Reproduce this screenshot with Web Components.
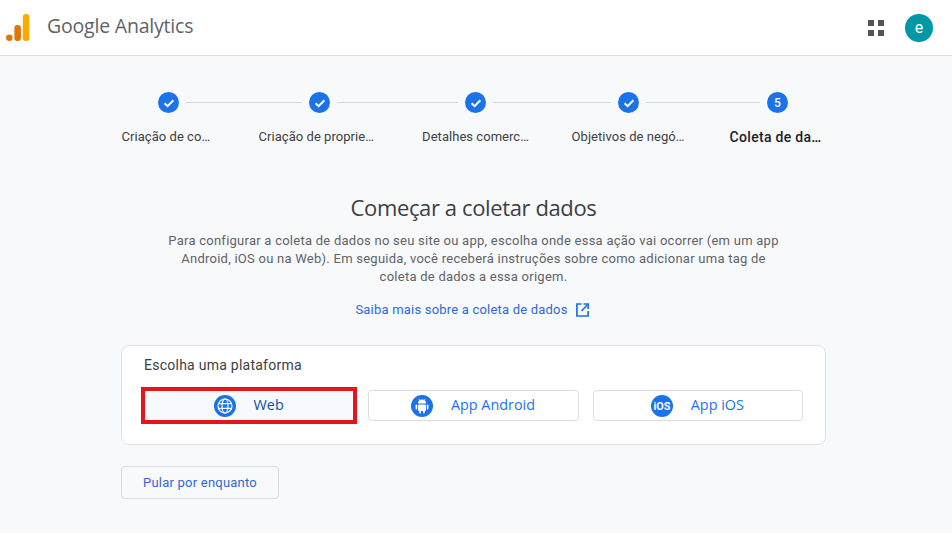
<!DOCTYPE html>
<html lang="pt">
<head>
<meta charset="utf-8">
<title>Google Analytics</title>
<style>
  html, body { margin: 0; padding: 0; height: 100%; overflow: hidden; }
  body { background: #f8f9fb; font-family: Roboto, "Noto Sans", sans-serif; color: #3c4043; }
</style>
</head>
<body>
<ga-topbar></ga-topbar>
<ga-page>
  <ga-stepper></ga-stepper>
  <ga-intro></ga-intro>
  <ga-platforms></ga-platforms>
  <ga-skip>Pular por enquanto</ga-skip>
</ga-page>

<script>
class GaTopbar extends HTMLElement {
  connectedCallback() {
    this.attachShadow({ mode: 'open' });
    this.shadowRoot.innerHTML = `
      <style>
        :host { display: flex; align-items: center; height: 55px; background: #fff; border-bottom: 1px solid #dadce0; }
        .logo { margin-left: 6px; display: block; }
        .name { margin-left: 17px; font: 400 19.5px "Open Sans", sans-serif; letter-spacing: -0.2px; color: #5f6368; position: relative; top: -2px; }
        .apps { margin-left: auto; display: block; }
        .avatar { width: 28px; height: 28px; margin: 0 19px 0 21px; border-radius: 50%; background: #0097a7; color: #fff; font: 400 16px Roboto, sans-serif; display: flex; align-items: center; justify-content: center; }
      </style>
      <svg class="logo" width="24" height="28" viewBox="0 0 24 28" aria-hidden="true">
        <circle cx="3.3" cy="23.7" r="3.2" fill="#e37400"/>
        <rect x="8.4" y="11" width="6.5" height="16" rx="3" fill="#e37400"/>
        <rect x="16.8" y="0" width="6.5" height="27" rx="3" fill="#f9ab00"/>
      </svg>
      <span class="name">Google Analytics</span>
      <svg class="apps" width="16" height="16" viewBox="0 0 16 16" fill="#545454" aria-hidden="true">
        <rect x="0" y="0" width="6" height="6"/><rect x="10" y="0" width="6" height="6"/>
        <rect x="0" y="10" width="6" height="6"/><rect x="10" y="10" width="6" height="6"/>
      </svg>
      <div class="avatar">e</div>
    `;
  }
}

class GaPage extends HTMLElement {
  connectedCallback() {
    this.attachShadow({ mode: 'open' });
    this.shadowRoot.innerHTML = `
      <style>
        :host { display: block; width: 705px; margin: 0 0 0 121px; }
      </style>
      <slot></slot>
    `;
  }
}

class GaStepper extends HTMLElement {
  connectedCallback() {
    const check = '<svg width="14" height="14" viewBox="0 0 14 14" aria-hidden="true"><path d="M2.6 7.3 5.6 10.2 11.4 4.3" fill="none" stroke="#fff" stroke-width="2"/></svg>';
    this.attachShadow({ mode: 'open' });
    this.shadowRoot.innerHTML = `
      <style>
        :host { display: block; padding-top: 36px; }
        .track { display: flex; align-items: center; padding-left: 37px; }
        .dot { flex: none; width: 21px; height: 21px; border-radius: 50%; background: #1a73e8; color: #fff; font: 500 12px Roboto, sans-serif; display: flex; align-items: center; justify-content: center; }
        .line { flex: none; height: 1px; background: #d5d7da; margin: 0 7px 0 7px; }
        .labels { display: flex; margin-top: 15px; padding-left: 0.6px; font-size: 13px; line-height: 18px; height: 18px; color: #3c4043; letter-spacing: 0.04px; white-space: nowrap; }
        .labels span { flex: none; }
        .labels .on { font-weight: 500; font-size: 14px; color: #202124; letter-spacing: 0.3px; }
      </style>
      <div class="track">
        <div class="dot">${check}</div><div class="line" style="width:116px"></div>
        <div class="dot">${check}</div><div class="line" style="width:121px"></div>
        <div class="dot">${check}</div><div class="line" style="width:118px"></div>
        <div class="dot">${check}</div><div class="line" style="width:114px"></div>
        <div class="dot">5</div>
      </div>
      <div class="labels">
        <span style="width:137px">Criação de co…</span>
        <span style="width:163.5px">Criação de proprie…</span>
        <span style="width:149.5px">Detalhes comerc…</span>
        <span style="width:158px">Objetivos de negó…</span>
        <span class="on">Coleta de da…</span>
      </div>
    `;
  }
}

class GaIntro extends HTMLElement {
  connectedCallback() {
    this.attachShadow({ mode: 'open' });
    this.shadowRoot.innerHTML = `
      <style>
        :host { display: block; text-align: center; padding-top: 46px; }
        h1 { margin: 0; font: 400 22px/30px "Open Sans", sans-serif; letter-spacing: -0.38px; color: #3c4043; }
        p { margin: 10px auto 0; width: 620px; font: 400 13px/18px Roboto, sans-serif; letter-spacing: 0.25px; color: #5f6368; }
        a { margin: 15px 3px 0 0; display: inline-flex; align-items: center; gap: 8px; font: 400 13px/18px Roboto, sans-serif; letter-spacing: 0.2px; color: #3367d6; text-decoration: none; }
        svg { display: block; }
      </style>
      <h1>Começar a coletar dados</h1>
      <p>Para configurar a coleta de dados no seu site ou app, escolha onde essa ação vai ocorrer (em um app Android, iOS ou na Web). Em seguida, você receberá instruções sobre como adicionar uma tag de coleta de dados a essa origem.</p>
      <a href="#">Saiba mais sobre a coleta de dados
        <svg width="13" height="14" viewBox="0 0 13 14" fill="none" stroke="#1a73e8" stroke-width="1.7" aria-hidden="true">
          <path d="M5.5 1H.9V13H12.1V8"/><path d="M7.5 1H12.1V6"/><path d="M12.1 1 5.5 8"/>
        </svg>
      </a>
    `;
  }
}

class GaPlatforms extends HTMLElement {
  connectedCallback() {
    this.attachShadow({ mode: 'open' });
    this.shadowRoot.innerHTML = `
      <style>
        :host { display: block; margin-top: 26px; box-sizing: border-box; height: 100px; background: #fff; border: 1px solid #dfe1e5; border-radius: 8px; padding: 9px 22px 0; }
        .title { font: 400 14px/20px Roboto, sans-serif; letter-spacing: 0.25px; color: #3c4043; }
        .row { display: flex; gap: 14px; margin-top: 15px; }
      </style>
      <div class="title">Escolha uma plataforma</div>
      <div class="row">
        <ga-platform-button icon="web" selected>Web</ga-platform-button>
        <ga-platform-button icon="android">App Android</ga-platform-button>
        <ga-platform-button icon="ios">App iOS</ga-platform-button>
      </div>
    `;
  }
}

const platformIcons = {
  web: `<circle cx="11" cy="11" r="11" fill="#1a73e8"/>
    <g fill="none" stroke="#fff" stroke-width="1.2"><circle cx="11" cy="11" r="7"/><ellipse cx="11" cy="11" rx="3" ry="7"/><path d="M4.4 8.6H17.6M4.4 13.4H17.6"/></g>`,
  android: `<circle cx="11" cy="11" r="11" fill="#1a73e8"/>
    <g fill="#fff"><path d="M7 8.6a4 4 0 0 1 8 0Z"/><rect x="7" y="9.4" width="8" height="6.6" rx="1"/><rect x="4.6" y="9.4" width="1.6" height="5.2" rx=".8"/><rect x="15.8" y="9.4" width="1.6" height="5.2" rx=".8"/><rect x="8.2" y="15" width="1.7" height="3.6" rx=".8"/><rect x="12.1" y="15" width="1.7" height="3.6" rx=".8"/></g>
    <g stroke="#fff" stroke-width=".7"><path d="M8.6 5 7.9 3.8M13.4 5l.7-1.2"/></g>`,
  ios: `<circle cx="11" cy="11" r="11" fill="#1a73e8"/>
    <text x="11" y="15" text-anchor="middle" font-family="Roboto, sans-serif" font-size="11.5" font-weight="700" fill="#fff" textLength="17" lengthAdjust="spacingAndGlyphs">iOS</text>`
};

class GaPlatformButton extends HTMLElement {
  connectedCallback() {
    this.attachShadow({ mode: 'open' });
    this.shadowRoot.innerHTML = `
      <style>
        :host { flex: 1 1 0; position: relative; box-sizing: border-box; height: 31px; padding-right: 1px; display: flex; align-items: center; justify-content: center; gap: 18px; background: #fff; border: 1px solid #dadce0; border-radius: 4px; font: 400 14.4px "Open Sans", sans-serif; color: #1a73e8; }
        :host([selected]) { background: #f6f9fe; color: #174ea6; border-color: transparent; }
        :host([selected]) .mark { position: absolute; inset: -4px -4px -4px -4px; border: 4px solid #e8141c; }
        svg { display: block; flex: none; }
        .label { position: relative; top: -1px; }
      </style>
      <svg width="22" height="22" viewBox="0 0 22 22" aria-hidden="true">${platformIcons[this.getAttribute('icon')]}</svg>
      <span class="label"><slot></slot></span>
      ${this.hasAttribute('selected') ? '<div class="mark"></div>' : ''}
    `;
  }
}

class GaSkip extends HTMLElement {
  connectedCallback() {
    this.attachShadow({ mode: 'open' });
    this.shadowRoot.innerHTML = `
      <style>
        :host { display: flex; align-items: center; justify-content: center; box-sizing: border-box; width: 158px; height: 33px; margin-top: 21px; padding-bottom: 1px; border: 1px solid #dadce0; border-radius: 4px; font: 400 13px Roboto, sans-serif; letter-spacing: 0.22px; color: #3367d6; }
      </style>
      <slot></slot>
    `;
  }
}

customElements.define('ga-topbar', GaTopbar);
customElements.define('ga-page', GaPage);
customElements.define('ga-stepper', GaStepper);
customElements.define('ga-intro', GaIntro);
customElements.define('ga-platforms', GaPlatforms);
customElements.define('ga-platform-button', GaPlatformButton);
customElements.define('ga-skip', GaSkip);
</script>
</body>
</html>
